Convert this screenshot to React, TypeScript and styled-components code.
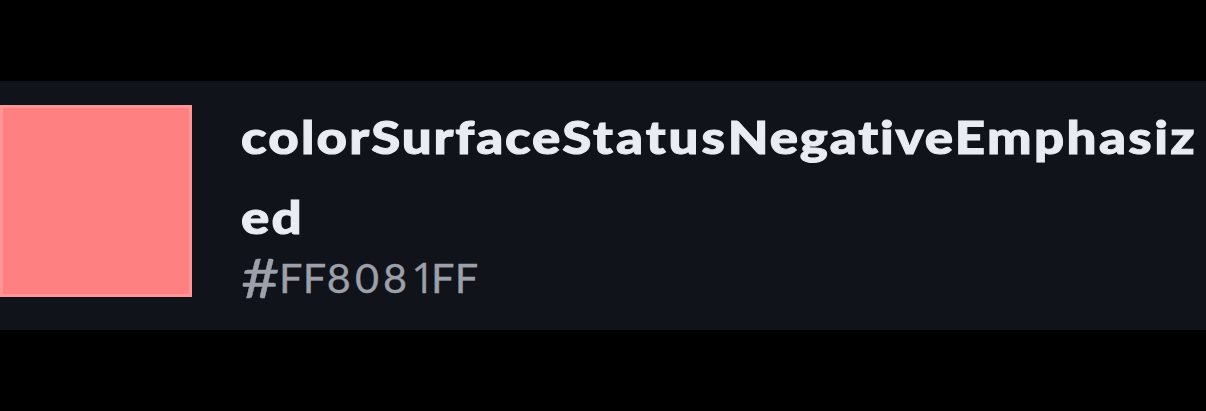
import React from "react";
import styled, { createGlobalStyle } from "styled-components";

const GlobalStyle = createGlobalStyle`
  * { box-sizing: border-box; }
  body { margin: 0; background: #000; font-family: Lato, "Open Sans", sans-serif; }
`;

const Page = styled.main`
  height: 411px;
  padding-top: 81px;
  overflow: hidden;
`;

const TokenRow = styled.section`
  display: flex;
  align-items: flex-start;
  gap: 49px;
  height: 249px;
  padding-top: 24px;
  background: #10131a;
`;

const Swatch = styled.div<{ $color: string }>`
  flex: none;
  width: 192px;
  height: 192px;
  border: 3px solid #ff9596;
  background: ${(p) => p.$color};
`;

const Details = styled.div`
  display: flex;
  flex-direction: column;
`;

const NameLine = styled.div`
  height: 80px;
  line-height: 63px;
  font-size: 46px;
  font-weight: 900;
  white-space: nowrap;
  color: #e9ecf2;
  -webkit-text-stroke: 1px #e9ecf2;
  stroke-linejoin: round;
  font-variant-ligatures: none;
  transform: scaleX(1.148);
  transform-origin: left center;
`;

const Value = styled.div`
  display: flex;
  align-items: baseline;
  margin-top: -14px;
  line-height: 52px;
  font-size: 41.5px;
  color: #9da0a9;
  -webkit-text-stroke: 0.3px #9da0a9;
`;

const Part = styled.span<{ $spacing: number; $plain?: boolean }>`
  letter-spacing: ${(p) => p.$spacing}px;
  font-family: ${(p) => (p.$plain ? '"Open Sans", sans-serif' : "inherit")};
`;

const Hash = styled.span`
  width: 38px;
  transform: scale(1.6, 1.3);
  transform-origin: left center;
`;

const nameParts = [
  { text: "color", spacing: 1.9 },
  { text: "Surface", spacing: 1.6 },
  { text: "Status", spacing: 2.6 },
  { text: "Negative", spacing: 1.6 },
  { text: "Emphasiz", spacing: 2.1 },
];

const valueParts = [
  { text: "FF", spacing: 0.4 },
  { text: "808", spacing: 4.1 },
  { text: "1", spacing: -4, plain: true },
  { text: "FF", spacing: 0.4 },
];

export default function App() {
  return (
    <Page>
      <GlobalStyle />
      <TokenRow>
        <Swatch $color="#ff8081" />
        <Details>
          <NameLine>
            {nameParts.map((part) => (
              <Part key={part.text} $spacing={part.spacing}>{part.text}</Part>
            ))}
          </NameLine>
          <NameLine>
            <Part $spacing={2}>ed</Part>
          </NameLine>
          <Value>
            <Hash>#</Hash>
            {valueParts.map((part, index) => (
              <Part key={index} $spacing={part.spacing} $plain={part.plain}>{part.text}</Part>
            ))}
          </Value>
        </Details>
      </TokenRow>
    </Page>
  );
}
